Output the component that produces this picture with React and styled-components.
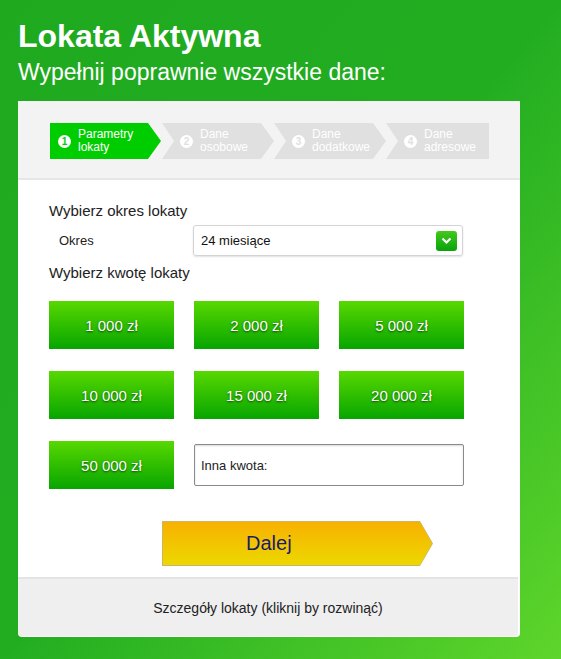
import React from "react";
import styled, { createGlobalStyle } from "styled-components";

const GlobalStyle = createGlobalStyle`
  html, body {
    margin: 0;
    padding: 0;
  }
  body {
    font-family: "Liberation Sans", Arial, sans-serif;
    background: linear-gradient(to bottom right, #1ea91f 0%, #22ad21 50%, #5ed52b 100%);
    min-height: 659px;
  }
`;

const Page = styled.div`
  padding: 18px 0 22px 18px;
  min-height: 659px;
  box-sizing: border-box;
`;

const Title = styled.h1`
  margin: 0;
  font-size: 32px;
  line-height: 36px;
  font-weight: bold;
  color: #fff;
`;

const Subtitle = styled.h2`
  margin: 5px 0 0;
  font-size: 23px;
  line-height: 26px;
  font-weight: normal;
  color: #fff;
`;

const Card = styled.div`
  margin-top: 16px;
  width: 502px;
  background: #fff;
  padding-bottom: 1px;
  border-radius: 0 0 4px 4px;
`;

const StepsBar = styled.div`
  height: 79px;
  box-sizing: border-box;
  padding: 22px 0 0 32px;
  background: #f3f3f3;
  border-bottom: 2px solid #e6e6e6;
  display: flex;
`;

const Step = styled.div`
  width: ${({ $last }) => ($last ? "103px" : "112px")};
  height: 36px;
  display: flex;
  align-items: center;
  gap: 7px;
  box-sizing: border-box;
  padding-left: ${({ $first }) => ($first ? "8px" : "18px")};
  background: ${({ $active }) => ($active ? "#00cd00" : "#e0e0e0")};
  clip-path: ${({ $first, $last }) =>
    $first
      ? "polygon(0 0, 98px 0, 111px 50%, 98px 100%, 0 100%)"
      : $last
      ? "polygon(0 0, 100% 0, 100% 100%, 0 100%, 12px 50%)"
      : "polygon(0 0, 99px 0, 112px 50%, 99px 100%, 0 100%, 12px 50%)"};
`;

const StepNum = styled.span`
  width: 13px;
  height: 13px;
  flex: none;
  border-radius: 50%;
  background: #fff;
  color: ${({ $active }) => ($active ? "#00cd00" : "#e0e0e0")};
  font-size: 10px;
  font-weight: bold;
  line-height: 13px;
  text-align: center;
`;

const StepLabel = styled.span`
  color: #fff;
  font-size: 12px;
  line-height: 13px;
`;

const Form = styled.div`
  padding: 22px 0 0 31px;
`;

const Heading = styled.div`
  font-size: 15px;
  line-height: 18px;
  color: #222;
  margin-top: ${({ $top }) => $top || "0"};
`;

const Row = styled.div`
  display: flex;
  align-items: center;
  margin-top: 5px;
`;

const Label = styled.div`
  width: 144px;
  box-sizing: border-box;
  padding-left: 10px;
  font-size: 13px;
  color: #222;
`;

const Select = styled.div`
  width: 270px;
  height: 31px;
  box-sizing: border-box;
  border: 1px solid #d4d4d4;
  border-radius: 3px;
  box-shadow: 0 1px 2px rgba(0, 0, 0, 0.12);
  display: flex;
  align-items: center;
  justify-content: space-between;
  padding: 0 5px 0 7px;
  font-size: 13px;
  color: #111;
`;

const SelectBtn = styled.span`
  width: 21px;
  height: 20px;
  border-radius: 3px;
  background: linear-gradient(#43c91c, #08a20b);
  display: flex;
  align-items: center;
  justify-content: center;
`;

const Amounts = styled.div`
  margin-top: 19px;
  display: grid;
  grid-template-columns: repeat(3, 125px);
  grid-auto-rows: 48px;
  column-gap: 20px;
  row-gap: 22px;
`;

const Amount = styled.div`
  display: flex;
  align-items: center;
  justify-content: center;
  background: linear-gradient(#58d800, #07a500);
  color: #fff;
  font-size: 15px;
  text-shadow: 0 1px 2px rgba(0, 40, 0, 0.75);
`;

const OtherAmount = styled.div`
  grid-column: span 2;
  align-self: center;
  height: 42px;
  box-sizing: border-box;
  border: 1px solid #8a8a8a;
  border-radius: 2px;
  box-shadow: inset 0 1px 2px rgba(0, 0, 0, 0.15);
  display: flex;
  align-items: center;
  padding-left: 6px;
  font-size: 13px;
  color: #222;
`;

const NextWrap = styled.div`
  margin: 32px 0 11px 113px;
  width: 271px;
  height: 45px;
  padding: 1px;
  box-sizing: border-box;
  background: #cdb46a;
  clip-path: polygon(0 0, 258px 0, 100% 50%, 258px 100%, 0 100%);
`;

const NextButton = styled.div`
  height: 100%;
  background: linear-gradient(#f8b100, #ecd800);
  clip-path: polygon(0 0, 257px 0, 100% 50%, 257px 100%, 0 100%);
  display: flex;
  align-items: center;
  padding-left: 83px;
  font-size: 20px;
  color: #1b1b6b;
`;

const Footer = styled.div`
  margin-right: 2px;
  height: 59px;
  box-sizing: border-box;
  border-top: 2px solid #e4e4e4;
  background: #efefef;
  border-radius: 0 0 4px 4px;
  display: flex;
  align-items: center;
  justify-content: center;
  font-size: 14px;
  color: #222;
`;

const steps = [
  ["Parametry", "lokaty"],
  ["Dane", "osobowe"],
  ["Dane", "dodatkowe"],
  ["Dane", "adresowe"],
];

const amounts = ["1 000 zł", "2 000 zł", "5 000 zł", "10 000 zł", "15 000 zł", "20 000 zł", "50 000 zł"];

export default function App() {
  return (
    <>
      <GlobalStyle />
      <Page>
        <Title>Lokata Aktywna</Title>
        <Subtitle>Wypełnij poprawnie wszystkie dane:</Subtitle>
        <Card>
          <StepsBar>
            {steps.map((s, i) => (
              <Step key={i} $active={i === 0} $first={i === 0} $last={i === steps.length - 1}>
                <StepNum $active={i === 0}>{i + 1}</StepNum>
                <StepLabel>
                  {s[0]}
                  <br />
                  {s[1]}
                </StepLabel>
              </Step>
            ))}
          </StepsBar>
          <Form>
            <Heading>Wybierz okres lokaty</Heading>
            <Row>
              <Label>Okres</Label>
              <Select>
                24 miesiące
                <SelectBtn>
                  <svg width="11" height="8" viewBox="0 0 11 8">
                    <path d="M1.5 1.5 L5.5 5.5 L9.5 1.5" fill="none" stroke="#fff" strokeWidth="2.2" />
                  </svg>
                </SelectBtn>
              </Select>
            </Row>
            <Heading $top="8px">Wybierz kwotę lokaty</Heading>
            <Amounts>
              {amounts.map((a) => (
                <Amount key={a}>{a}</Amount>
              ))}
              <OtherAmount>Inna kwota:</OtherAmount>
            </Amounts>
            <NextWrap>
              <NextButton>Dalej</NextButton>
            </NextWrap>
          </Form>
          <Footer>Szczegóły lokaty (kliknij by rozwinąć)</Footer>
        </Card>
      </Page>
    </>
  );
}
